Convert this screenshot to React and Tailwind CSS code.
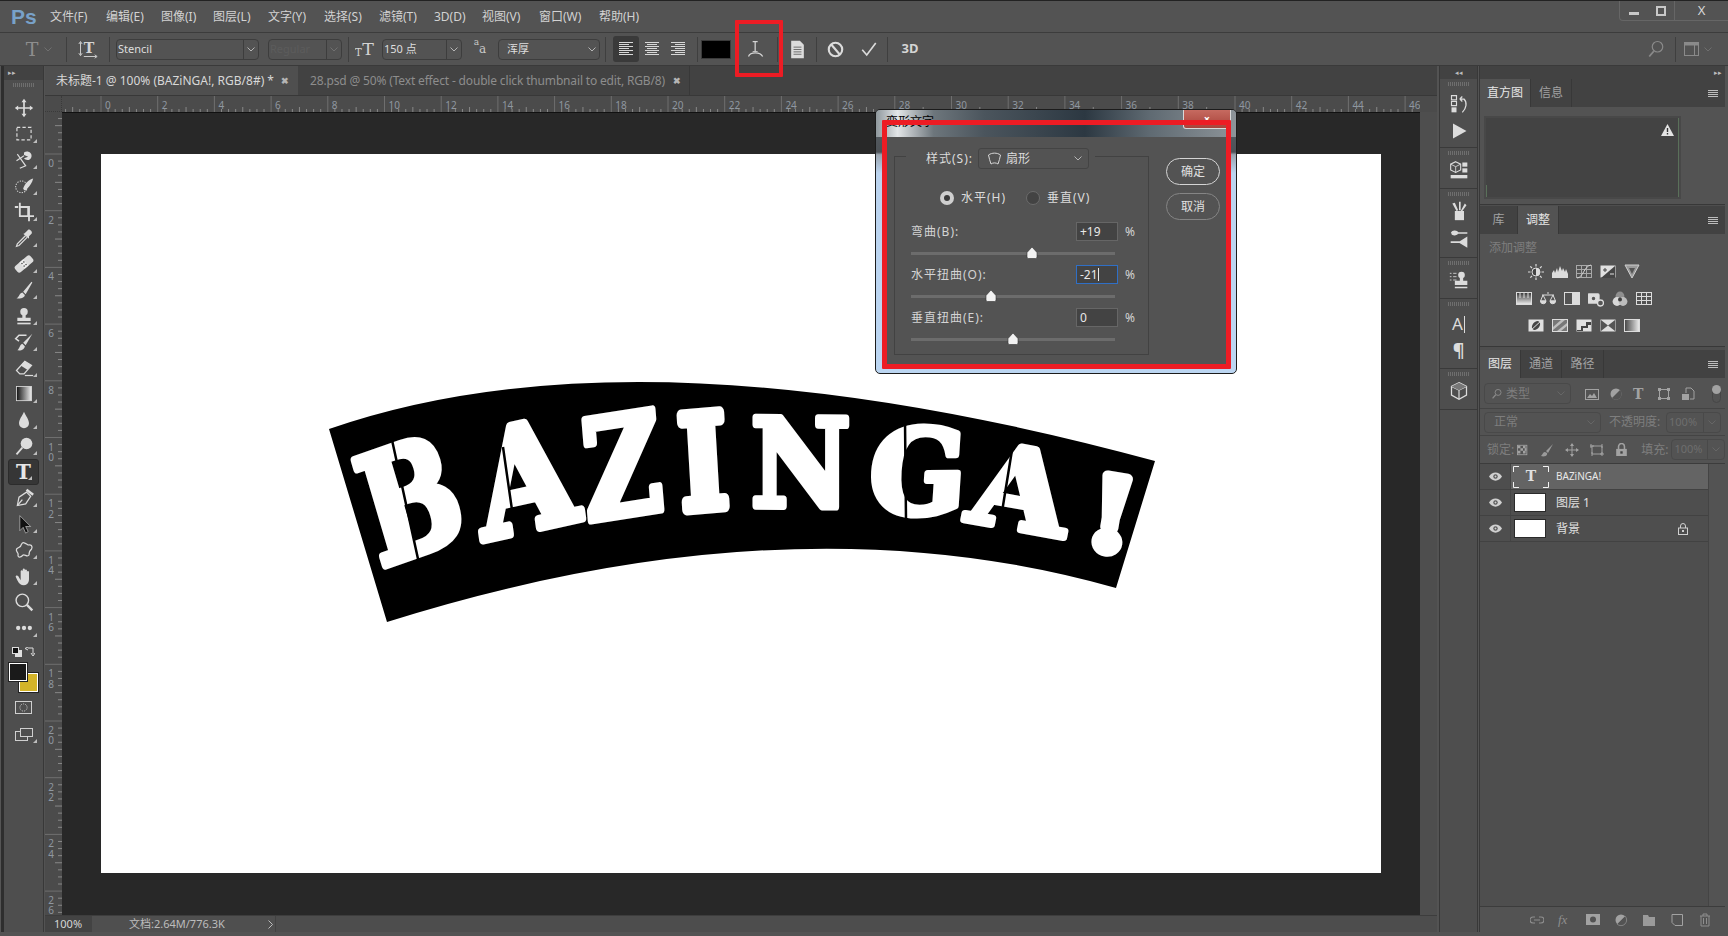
import React from "react";

const C = "#dcdcdc";
const Svg = ({ w = 22, h, vb = "0 0 24 24", children, className = "" }) => (
  <svg width={w} height={h || w} viewBox={vb} fill="none" className={className}>{children}</svg>
);
const Corner = () => (
  <svg width="4" height="4" viewBox="0 0 4 4" className="absolute right-[6px] bottom-[4px]"><path d="M4 0V4H0Z" fill="#bdbdbd" /></svg>
);

const tools = [
  { n: "move", c: 0, i: <g stroke={C} strokeWidth="2"><path d="M12 3V21M3 12H21" /><path d="M12 1L9 5H15ZM12 23L9 19H15ZM1 12L5 9V15ZM23 12L19 9V15Z" fill={C} stroke="none" /></g> },
  { n: "marquee", c: 1, i: <rect x="3.5" y="4" width="17" height="15" stroke={C} strokeWidth="1.4" strokeDasharray="4 2.6" /> },
  { n: "lasso", c: 1, i: <g stroke={C} strokeWidth="1.4"><path d="M4 5L14 19L7 22M3 13L12 7" /><path d="M12 3C16 0 22 3 21 8C20 13 14 13 12 10L17 8L12 6Z" fill={C} stroke="none" /></g> },
  { n: "quick", c: 1, i: <g><circle cx="9" cy="13" r="7" stroke={C} strokeWidth="1.3" strokeDasharray="1.4 1.6" /><path d="M23 3C18 4 13 9 11 15C12 18 15 18 16 15C19 12 22 8 23 3Z" fill={C} /></g> },
  { n: "crop", c: 1, i: <path d="M1 6H5M7 1V17H21M7 6H18V23M8 6H17V16M21 17H24" stroke={C} strokeWidth="2.2" /> },
  { n: "dropper", c: 1, i: <g><path d="M14 9L4 19L3 22L6 21L16 11" stroke={C} strokeWidth="1.5" /><path d="M12 7L14 5L17 2C19 1 23 5 21 7L18 10L18 13L11 7Z" fill={C} /></g> },
  { n: "heal", c: 1, i: <g transform="rotate(-40 12 12)"><rect x="0" y="7" width="24" height="10" rx="3" fill={C} /><rect x="9" y="7" width="6" height="10" fill="#eee" /><circle cx="10.5" cy="10" r=".9" fill="#444" /><circle cx="13.5" cy="10" r=".9" fill="#444" /><circle cx="10.5" cy="14" r=".9" fill="#444" /><circle cx="13.5" cy="14" r=".9" fill="#444" /></g> },
  { n: "brush", c: 1, i: <path d="M21 2L11 14L14 17L22 3ZM10 15C6 16 7 20 3 22C8 23 13 21 13 18Z" fill={C} /> },
  { n: "stamp", c: 1, i: <g fill={C}><circle cx="12" cy="7" r="4.5" /><path d="M10 10H14V14H20V18H4V14H10Z" /><rect x="4" y="20" width="16" height="2" /></g> },
  { n: "history", c: 1, i: <g><path d="M22 2L11 13L14 16Z" fill={C} /><path d="M10 14C7 15 7 19 4 22C9 23 13 20 13 17Z" fill={C} /><path d="M15 4H6L2 8L6 11" stroke={C} strokeWidth="1.8" /></g> },
  { n: "eraser", c: 1, i: <g><path d="M3 15L13 4L21 9L12 19H7Z" stroke={C} strokeWidth="1.5" /><path d="M13 4L21 9L16 14L8 9Z" fill={C} /><path d="M13 21H23" stroke={C} strokeWidth="1.5" /></g> },
  { n: "gradient", c: 1, i: <g><defs><linearGradient id="g1"><stop offset="0" stopColor="#111" /><stop offset="1" stopColor="#eee" /></linearGradient></defs><rect x="3" y="3" width="18" height="17" fill="url(#g1)" stroke={C} /></g> },
  { n: "blur", c: 1, i: <path d="M12 2C10 7 6 11 6 16A6 6 0 0 0 18 16C18 11 14 7 12 2Z" fill={C} /> },
  { n: "dodge", c: 1, i: <g><circle cx="15" cy="9" r="7" fill={C} /><path d="M10 14L3 22" stroke={C} strokeWidth="2.2" /></g> },
  { n: "type", c: 1, a: 1, t: 1 },
  { n: "pen", c: 1, i: <g stroke={C} strokeWidth="1.5"><path d="M4 21L6 11L15 5L20 10L14 19Z" /><path d="M4 21L10 14" /><path d="M15 2L23 8" strokeWidth="3" /></g> },
  { n: "path", c: 1, i: <path d="M7 2V20L11 16L14 23L17 21L14 15H20Z" fill="#111" stroke="#ddd" strokeWidth=".7" /> },
  { n: "shape", c: 1, i: <path d="M3 11C5 8 8 10 9 5C11 1 15 5 17 6C20 5 23 7 21 11C18 13 18 15 18 18C16 21 13 17 11 18C7 22 4 21 5 17C5 15 2 14 3 11Z" stroke={C} strokeWidth="1.5" /> },
  { n: "hand", c: 1, i: <path d="M5 12L8 17V6A1.3 1.3 0 0 1 10.5 6V12V4A1.3 1.3 0 0 1 13 4V12V5A1.3 1.3 0 0 1 15.5 5V12V7A1.3 1.3 0 0 1 18 7V16C18 20 16 23 12 23C8 23 6 21 4 17L2 13C2 11 4 11 5 12Z" fill={C} /> },
  { n: "zoom", c: 0, i: <g stroke={C} strokeWidth="1.7"><circle cx="10" cy="10" r="7.5" /><path d="M15.5 15.5L22 22" strokeWidth="2.8" /></g> },
  { n: "more", c: 1, i: <g fill={C}><circle cx="5" cy="12" r="2.6" /><circle cx="12" cy="12" r="2.6" /><circle cx="19" cy="12" r="2.6" /></g> },
];

function TopRuler() {
  const ticks = [];
  const x0 = 39;
  for (let k = -5; k < 186; k++) {
    const x = x0 + k * 7.0875;
    const major = k % 8 === 0;
    ticks.push(<line key={k} x1={x} x2={x} y1={major ? 0 : k % 4 === 0 ? 11 : 13} y2="16" stroke={major ? "#6f6f6f" : "#878787"} />);
  }
  const labels = [];
  for (let v = 0; v <= 46; v += 2) labels.push(<text key={v} x={x0 + 4 + v * 28.35} y="13" fontSize="10" fill="#8f97a0" fontFamily="Noto Sans">{v}</text>);
  return <svg width="1358" height="16" className="block">{ticks}{labels}</svg>;
}
function LeftRuler() {
  const ticks = [];
  const y0 = 42;
  for (let k = -5; k < 108; k++) {
    const y = y0 + k * 7.0875;
    const major = k % 8 === 0;
    ticks.push(<line key={k} y1={y} y2={y} x1={major ? 0 : k % 4 === 0 ? 10 : 13} x2="17" stroke={major ? "#6f6f6f" : "#878787"} />);
  }
  const labels = [];
  for (let v = 0; v <= 26; v += 2) {
    labels.push(
      <text key={v} x="6" y={y0 + v * 28.35 + 2} fontSize="10" fill="#8f97a0" fontFamily="Noto Sans" style={{ writingMode: "vertical-rl", textOrientation: "upright", letterSpacing: "-3.6px" }}>{v}</text>
    );
  }
  return <svg width="17" height="803" className="block">{ticks}{labels}</svg>;
}

function Letter({ ch, w, bl, br, tl, sw = 6, cap = 78 }) {
  const a = (br[0] - bl[0]) / w, b = (br[1] - bl[1]) / w;
  const c = (bl[0] - tl[0]) / cap, d = (bl[1] - tl[1]) / cap;
  return <text transform={`matrix(${a} ${b} ${c} ${d} ${bl[0]} ${bl[1]})`} fontFamily="DejaVu Serif" fontWeight="700" fontSize="100" fill="#fff" stroke="#fff" strokeWidth={sw} strokeLinejoin="round">{ch}</text>;
}

function Art() {
  return (
    <svg width="1280" height="719" viewBox="101 154 1280 719" className="block">
      <rect x="101" y="154" width="1280" height="719" fill="#fff" />
      <path d="M329 429Q640 321 1155 461L1116 588Q790 495 387 622Z" fill="#000" />
      <Letter ch="B" w={80} bl={[380, 567]} br={[466, 537]} tl={[347, 455]} />
      <Letter ch="A" w={76} bl={[484, 540]} br={[579, 519]} tl={[468, 428]} />
      <Letter ch="Z" w={72} bl={[587, 521]} br={[664, 509]} tl={[578, 414]} />
      <Letter ch="I" w={47} bl={[682, 510]} br={[730, 506]} tl={[676, 409]} sw={9} />
      <Letter ch="N" w={92} bl={[751, 506]} br={[851, 507]} tl={[751, 411]} />
      <Letter ch="G" w={82} bl={[867, 514]} br={[960, 513]} tl={[873, 423]} />
      <Letter ch="A" w={76} bl={[965, 520]} br={[1060, 537]} tl={[982, 434]} />
      <Letter ch="!" w={27} bl={[1082, 546]} br={[1111, 551]} tl={[1095, 468]} sw={10} />
      <g stroke="#000" strokeWidth="2.5">
        <path d="M392 440L420 568M905 421L906 520M503 447L512 510M1012 450L1002 512" />
      </g>
    </svg>
  );
}

const Sep = () => <div className="w-px h-[25px] bg-[#3f3f3f] shrink-0" />;
const Caret = ({ c = "#b5b5b5" }) => <svg width="8" height="5" viewBox="0 0 8 5"><path d="M.5.5L4 4L7.5.5" stroke={c} fill="none" /></svg>;

function Select({ className, label, divide, faded, lp = "pl-[1px]" }) {
  return (
    <div className={`h-[21px] rounded-[4px] border border-[#3d3d3d] flex items-center shrink-0 ${className}`}>
      <span className={`flex-1 text-[11px] whitespace-nowrap ${lp} ${faded ? "text-[#5c5c5c]" : "text-[#dedede]"}`}>{label}</span>
      <span className={`w-[15px] h-full flex items-center justify-center ${divide ? "border-l border-[#3d3d3d]" : ""}`}><Caret c={faded ? "#707070" : "#b5b5b5"} /></span>
    </div>
  );
}

const AlignIcon = ({ kind }) => {
  const rows = [14, 10, 14, 10, 14, 10, 14];
  return (
    <svg width="14" height="15" viewBox="0 0 14 15">
      {rows.map((r, i) => {
        const x = kind === "l" ? 0 : kind === "c" ? (14 - r) / 2 : 14 - r;
        return <rect key={i} x={x} y={i * 2} width={r} height="1" fill="#d8d8d8" />;
      })}
    </svg>
  );
};

const menu = [
  ["文件(F)", "w-[56px]"], ["编辑(E)", "w-[55px]"], ["图像(I)", "w-[52px]"], ["图层(L)", "w-[55px]"], ["文字(Y)", "w-[56px]"],
  ["选择(S)", "w-[55px]"], ["滤镜(T)", "w-[55px]"], ["3D(D)", "w-[48px]"], ["视图(V)", "w-[57px]"], ["窗口(W)", "w-[60px]"], ["帮助(H)", "w-[60px]"],
];

const Grip = () => (
  <svg width="22" height="4" viewBox="0 0 22 4" className="block mx-auto">
    {Array.from({ length: 11 }).map((_, i) => <rect key={i} x={i * 2} y="0" width="1" height="4" fill="#6e6e6e" />)}
  </svg>
);

const Dock = ({ className = "", children }) => (
  <div className={`border-b border-[#3a3a3a] flex flex-col items-center pt-[3px] shrink-0 ${className}`}><Grip />{children}</div>
);

const adjA = [
  <g key="a"><circle cx="8" cy="8" r="4" fill="#444" stroke={C} /><path d="M8 4A4 4 0 0 1 8 12Z" fill={C} /><path d="M8 0V2.5M8 13.5V16M0 8H2.5M13.5 8H16M2.3 2.3L4 4M12 12L13.7 13.7M2.3 13.7L4 12M12 4L13.7 2.3" stroke={C} strokeWidth="1.2" /></g>,
  <path key="b" d="M0 14V9L2 6L3 9L5 4L6 8L8 2L10 7L11 4L13 8L14 5L16 10V14Z" fill={C} />,
  <g key="c" stroke="#a8a8a8"><rect x=".5" y="1.5" width="15" height="12" /><path d="M5.5 1.5V13.5M10.5 1.5V13.5M.5 5.5H15.5M.5 9.5H15.5" /><path d="M1 14C7 14 8 2 15 1" stroke="#d0d0d0" /></g>,
  <g key="d"><rect x=".5" y="1.5" width="15" height="12" fill="#e0e0e0" /><path d="M1 14L15 2V14Z" fill="#444" /><path d="M3 6H7M5 4V8" stroke="#444" strokeWidth="1" /><path d="M10 10H14" stroke="#e0e0e0" /></g>,
  <g key="e"><path d="M1 1H15L8 14Z" fill="#9a9a9a" stroke="#cfcfcf" /><path d="M5 4H11L8 10Z" fill="#555" /></g>,
];
const adjB = [
  <g key="a"><defs><linearGradient id="g2" x1="0" y1="0" x2="0" y2="1"><stop offset="0" stopColor="#333" /><stop offset="1" stopColor="#eee" /></linearGradient></defs><rect x=".5" y="1.5" width="15" height="12" fill="url(#g2)" stroke={C} /><path d="M4 2V7M8 2V7M12 2V7" stroke="#ddd" /></g>,
  <g key="b" stroke={C}><path d="M8 1V3M2 4H14M3 4L.5 10H6ZM13 4L10 10H15.5Z" /><path d="M.5 10A2.7 2.7 0 0 0 6 10ZM10 10A2.7 2.7 0 0 0 15.5 10Z" fill={C} /></g>,
  <g key="c"><rect x=".5" y="1.5" width="15" height="12" stroke={C} /><rect x="8" y="1.5" width="7.5" height="12" fill={C} /></g>,
  <g key="d" stroke={C} strokeWidth="1.3"><rect x="0" y="3" width="11" height="9" rx="1" fill="#ddd" /><circle cx="5.5" cy="7.5" r="2.4" fill="#555" /><circle cx="12.5" cy="12" r="3" fill="#555" /></g>,
  <g key="e"><circle cx="8" cy="5" r="4.4" fill="#8f8f8f" /><circle cx="5" cy="10.5" r="4.4" fill="#d8d8d8" /><circle cx="11" cy="10.5" r="4.4" fill="#bdbdbd" /><circle cx="8" cy="8.5" r="2" fill="#3d3d3d" /></g>,
  <g key="f" stroke={C}><rect x=".5" y="1.5" width="15" height="12" /><path d="M5.5 1.5V13.5M10.5 1.5V13.5M.5 5.5H15.5M.5 9.5H15.5" /></g>,
];
const adjC = [
  <g key="a"><rect x=".5" y="1.5" width="15" height="12" fill="#e0e0e0" /><ellipse cx="8" cy="7.5" rx="3.4" ry="5" transform="rotate(40 8 7.5)" fill="#444" /><path d="M2 13L14 2" stroke="#e0e0e0" /></g>,
  <g key="b"><rect x=".5" y="1.5" width="15" height="12" fill="#777" stroke={C} /><path d="M1 9L9 2H13L1 12ZM5 13L15 5V8L9 13Z" fill="#bdbdbd" /></g>,
  <g key="c"><rect x=".5" y="1.5" width="15" height="12" fill="#e0e0e0" /><path d="M1 12H5V8H10V4H15V7H12V10H7V13H1Z" fill="#444" /></g>,
  <g key="d"><rect x=".5" y="1.5" width="15" height="12" fill="#e0e0e0" /><path d="M1 2L8 7.5L1 13ZM15 2L8 7.5L15 13Z" fill="#555" /></g>,
  <g key="e"><defs><linearGradient id="g3"><stop offset="0" stopColor="#444" /><stop offset="1" stopColor="#eee" /></linearGradient></defs><rect x=".5" y="1.5" width="15" height="12" fill="url(#g3)" stroke={C} /></g>,
];
const AdjRow = ({ items, className }) => (
  <div className={`flex gap-[8px] justify-center w-[208px] ${className}`}>
    {items.map((x, i) => <svg key={i} width="16" height="16" viewBox="0 0 16 16" fill="none">{x}</svg>)}
  </div>
);

const PTab = ({ active, className, children }) => (
  <div className={`h-full flex items-center justify-center text-[12px] border-r border-[#383838] shrink-0 ${className} ${active ? "bg-[#535353] text-[#e6e6e6]" : "text-[#a2a2a2]"}`}>{children}</div>
);
const Ham = () => (
  <svg width="10" height="7" viewBox="0 0 10 7" className="ml-auto mr-[7px]"><path d="M0 .5H10M0 2.5H10M0 4.5H10M0 6.5H10" stroke="#bdbdbd" /></svg>
);
const Eye = () => (
  <svg width="13" height="9" viewBox="0 0 13 9"><path d="M0 4.5C3 -1 10 -1 13 4.5C10 10 3 10 0 4.5Z" fill="#d0d0d0" /><circle cx="6.5" cy="4.5" r="2.2" fill="#555" /><circle cx="6.5" cy="4.5" r="1" fill="#d0d0d0" /></svg>
);
const Lock = ({ c = "#8e8e8e", s = 11 }) => (
  <svg width={s} height={s} viewBox="0 0 11 11"><path d="M3 5V3A2.5 2.5 0 0 1 8 3V5" stroke={c} fill="none" strokeWidth="1.3" /><rect x="1" y="5" width="9" height="6" fill={c} /><rect x="4.5" y="7" width="2" height="2" fill="#444" /></svg>
);
const Small = ({ children, w = 14 }) => <svg width={w} height="14" viewBox="0 0 14 14" fill="none">{children}</svg>;

const Slider = ({ pos }) => (
  <div className="relative w-[204px] h-[3px] bg-[#6c6c6c] mt-[11px]">
    <svg width="12" height="12" viewBox="0 0 12 12" className="absolute top-[-5px]" style={{ left: pos }}><path d="M6 0L11 5.5V10A1.5 1.5 0 0 1 9.5 11.5H2.5A1.5 1.5 0 0 1 1 10V5.5Z" fill="#f2f2f2" stroke="#333" strokeWidth=".6" /></svg>
  </div>
);
const Row = ({ label, field, mt, children, focus }) => (
  <div className={`flex items-center h-[19px] text-[12px] text-[#d4d4d4] ${mt}`}>
    <span className="w-[165px] tracking-[1px]">{label}</span>
    <span className={`w-[42px] h-[19px] bg-[#434343] border flex items-center pl-[3px] text-[#e8e8e8] text-[12px] ${focus ? "border-[#2f6fc6]" : "border-[#666666]"}`}>{field}{children}</span>
    <span className="ml-[7px] text-[12px]">%</span>
  </div>
);

export default function App() {
  return (
    <div className="relative w-[1728px] h-[936px] overflow-hidden bg-[#2b2b2b] flex flex-col font-['Noto_Sans','Noto_Sans_CJK_SC',sans-serif] text-[#d6d6d6]">
      {/* title + menu */}
      <div className="h-[32px] bg-[#535353] flex items-center shrink-0 border-t border-[#222222]">
        <span className="w-[50px] pl-[11px] text-[21px] font-bold leading-none text-[#78a1c9] font-['Liberation_Sans',sans-serif]">Ps</span>
        {menu.map(([t, w]) => <span key={t} className={`${w} shrink-0 text-[12px] whitespace-nowrap text-[#d2d2d2]`}>{t}</span>)}
        <div className="ml-auto self-start w-[109px] h-[20px] border-l border-b border-[#666666] rounded-bl-[4px] flex items-center">
          <span className="w-[27px] flex justify-center pt-[6px]"><span className="w-[10px] h-[3px] bg-[#c8c8c8] block" /></span>
          <span className="w-[28px] flex justify-center border-r border-[#666666] h-full items-center"><span className="w-[10px] h-[10px] border-[2px] border-[#c8c8c8] block" /></span>
          <span className="flex-1 text-center text-[13px] text-[#d8d8d8] leading-none">X</span>
        </div>
      </div>
      {/* options */}
      <div className="h-[33px] bg-[#535353] border-t border-[#3c3c3c] flex items-center shrink-0">
        <div className="w-[12px]" />
        <div className="w-[54px] flex items-center justify-center gap-[6px] shrink-0">
          <span className="text-[19px] leading-none text-[#8e8e8e] font-['DejaVu_Serif',serif]">T</span><Caret c="#707070" />
        </div>
        <Sep />
        <div className="w-[42px] flex justify-center shrink-0">
          <Svg w={20}><text x="7" y="17" fontSize="17" fontWeight="700" fontFamily="DejaVu Serif" fill="#d4d4d4">T</text><path d="M3 4V19M1 6L3 3L5 6M1 17L3 20L5 17M7 21H22M20 19L23 21L20 23" stroke="#d4d4d4" strokeWidth="1.1" /></Svg>
        </div>
        <Sep />
        <Select className="ml-[6px] w-[143px]" label="Stencil" divide />
        <Select className="ml-[9px] w-[74px]" label="Regular" divide faded />
        <div className="ml-[6px]"><Sep /></div>
        <div className="w-[33px] flex justify-center shrink-0">
          <Svg w={22}><text x="8" y="18" fontSize="19" fontWeight="400" fontFamily="DejaVu Serif" fill="#d4d4d4">T</text><text x="0" y="20" fontSize="11" fontWeight="400" fontFamily="DejaVu Serif" fill="#d4d4d4">T</text></Svg>
        </div>
        <Select className="w-[80px]" label="150 点" divide />
        <div className="w-[36px] flex justify-center shrink-0 text-[12px] text-[#c8c8c8] font-['DejaVu_Serif',serif]"><span className="text-[9px] -mt-[4px]">a</span><span>a</span></div>
        <Select className="w-[102px]" label="浑厚" lp="pl-[8px]" />
        <div className="ml-[5px]"><Sep /></div>
        <div className="ml-[7px] w-[26px] h-[26px] rounded-[3px] bg-[#3a3a3a] flex items-center justify-center shrink-0"><AlignIcon kind="l" /></div>
        <div className="w-[26px] flex justify-center shrink-0"><AlignIcon kind="c" /></div>
        <div className="w-[26px] flex justify-center shrink-0"><AlignIcon kind="r" /></div>
        <div className="ml-[6px]"><Sep /></div>
        <div className="ml-[3px] w-[30px] h-[19px] bg-black border border-[#3a3a3a] shrink-0" />
        <div className="w-[46px] flex justify-center shrink-0 pl-[4px]">
          <Svg w={20}><path d="M8 3H14M11 3V15M3 21C5 15 17 15 20 21" stroke="#d4d4d4" strokeWidth="1.5" /><path d="M8 15H14" stroke="#d4d4d4" /></Svg>
        </div>
        <Sep />
        <div className="w-[38px] flex justify-center shrink-0">
          <Svg w={19}><path d="M4 1H15L20 6V23H4Z" fill="#dcdcdc" /><path d="M7 9H17M7 12H17M7 15H17M7 18H17" stroke="#535353" /></Svg>
        </div>
        <Sep />
        <div className="w-[37px] flex justify-center shrink-0">
          <Svg w={17}><circle cx="12" cy="12" r="9.5" stroke="#dcdcdc" strokeWidth="3" /><path d="M6 5L18 19" stroke="#dcdcdc" strokeWidth="3" /></Svg>
        </div>
        <div className="w-[33px] flex justify-start pl-[6px] shrink-0">
          <Svg w={18}><path d="M3 13L9 20L21 4" stroke="#dcdcdc" strokeWidth="2.2" /></Svg>
        </div>
        <Sep />
        <div className="w-[44px] text-center text-[13px] font-bold text-[#d4d4d4] shrink-0">3D</div>
        <div className="ml-auto w-[38px] flex justify-center shrink-0">
          <Svg w={18}><circle cx="14" cy="9" r="7" stroke="#8a8a8a" strokeWidth="1.6" /><path d="M9 15L3 22" stroke="#8a8a8a" strokeWidth="2.4" /></Svg>
        </div>
        <Sep />
        <div className="w-[52px] pl-[8px] flex items-center gap-[5px] shrink-0">
          <svg width="15" height="14" viewBox="0 0 15 14"><rect x=".5" y=".5" width="14" height="13" stroke="#8a8a8a" fill="none" /><rect x=".5" y=".5" width="14" height="3" fill="#8a8a8a" /><path d="M10.5 3V13" stroke="#8a8a8a" /></svg>
          <Caret c="#6f6f6f" />
        </div>
      </div>
      {/* body */}
      <div className="flex-1 flex min-h-0 pb-[4px] border-t border-[#3a3a3a] bg-[#535353]">
        <div className="w-[4px] bg-[#2e2e2e] border-l border-[#555555] shrink-0" />
        <div className="w-[40px] shrink-0 bg-[#4e4e4e] border-r border-[#383838] flex flex-col">
          <div className="h-[14px] bg-[#424242] text-[7px] leading-[14px] pl-[4px] text-[#bdbdbd]">▸▸</div>
          <div className="h-[15px] pt-[3px]"><Grip /></div>
          {tools.map((t) => (
            <div key={t.n} className={`relative h-[26px] flex items-center justify-center shrink-0 ${t.a ? "bg-[#363636] border border-[#2c2c2c] rounded-[3px] mx-[4px]" : ""}`}>
              {t.t ? <span className="text-[20px] font-bold leading-none text-[#e6e6e6] font-['DejaVu_Serif',serif]">T</span> : <Svg w={20}>{t.i}</Svg>}
              {t.c === 1 && <Corner />}
            </div>
          ))}
          <div className="flex justify-between px-[8px] mt-[4px] h-[14px] items-center">
            <svg width="10" height="10" viewBox="0 0 10 10"><rect x="3" y="3" width="7" height="7" fill="#e0e0e0" /><rect x=".5" y=".5" width="6" height="6" fill="#111" stroke="#ddd" /></svg>
            <svg width="10" height="10" viewBox="0 0 10 10"><path d="M3 1H8V7M6 6L8 9L10 6M3 0L0 1.5L3 3" stroke="#ddd" fill="none" /></svg>
          </div>
          <div className="relative h-[30px] mt-[4px]">
            <div className="absolute left-[15px] top-[10px] w-[19px] h-[19px] bg-[#d4b429] border border-white outline outline-1 outline-[#222222]" />
            <div className="absolute left-[5px] top-[0px] w-[18px] h-[18px] bg-[#1a1a1a] border border-white outline outline-1 outline-[#222222]" />
          </div>
          <div className="h-[28px] flex items-center justify-center">
            <svg width="17" height="13" viewBox="0 0 17 13"><rect x=".5" y=".5" width="16" height="12" stroke="#cfcfcf" fill="none" /><circle cx="8.5" cy="6.5" r="3.6" stroke="#cfcfcf" strokeDasharray="1 1" fill="none" /></svg>
          </div>
          <div className="relative h-[26px] flex items-center justify-center">
            <svg width="18" height="13" viewBox="0 0 18 13" fill="none"><rect x=".5" y="3.5" width="12" height="9" stroke="#cfcfcf" /><rect x="5.5" y=".5" width="12" height="8" fill="#4e4e4e" stroke="#cfcfcf" /></svg>
            <Corner />
          </div>
        </div>
        {/* centre */}
        <div className="w-[1392px] ml-px shrink-0 flex flex-col min-h-0">
          <div className="h-[30px] bg-[#424242] flex shrink-0 border-b border-[#383838] text-[12px]">
            <div className="w-[253px] bg-[#4f4f4f] flex items-center pl-[11px] text-[#d8d8d8] whitespace-nowrap shrink-0">
              <span className="flex-1">未标题-1 @ 100% (BAZiNGA!, RGB/8#) *</span><span className="pr-[9px] text-[9px] font-bold text-[#b5b5b5]">✖</span>
            </div>
            <div className="w-[392px] flex items-center pl-[12px] text-[#8d8d8d] whitespace-nowrap border-r border-[#383838] shrink-0">
              <span className="flex-1 tracking-[-0.16px]">28.psd @ 50% (Text effect - double click thumbnail to edit, RGB/8)</span><span className="pr-[8px] text-[9px] font-bold text-[#b5b5b5]">✖</span>
            </div>
          </div>
          <div className="h-[16px] flex shrink-0 bg-[#4b4b4b]">
            <div className="w-[17px] shrink-0 border-r border-[#3a3a3a] border-b border-dotted" />
            <TopRuler />
          </div>
          <div className="flex-1 flex min-h-0">
            <div className="w-[17px] shrink-0 bg-[#4b4b4b] overflow-hidden"><LeftRuler /></div>
            <div className="w-[1358px] shrink-0 bg-[#282828] border-t border-[#111111] pl-[39px] pt-[41px] overflow-hidden">
              <Art />
            </div>
            <div className="flex-1 bg-[#4e4e4e]" />
          </div>
          <div className="h-[17px] bg-[#4d4d4d] flex items-center shrink-0 text-[11px] border-t border-[#3d3d3d]">
            <span className="w-[47px] h-full bg-[#434343] pl-[9px] text-[#d6d6d6]">100%</span>
            <span className="w-[184px] h-full bg-[#4f4f4f] border-r border-[#424242] flex items-center pl-[37px] text-[#bdbdbd] whitespace-nowrap">
              <span className="w-[139px]">文档:2.64M/776.3K</span>
              <svg width="5" height="9" viewBox="0 0 5 9"><path d="M.5.5L4.5 4.5L.5 8.5" stroke="#bdbdbd" fill="none" /></svg>
            </span>
          </div>
        </div>
        {/* dock */}
        <div className="ml-[2px] w-[39px] shrink-0 flex flex-col bg-[#4e4e4e] border-x border-[#383838]">
          <div className="h-[13px] bg-[#424242] shrink-0 text-[7px] leading-[13px] text-center text-[#bdbdbd]">◂◂</div>
          <Dock className="h-[69px]">
            <div className="mt-[8px]"><Svg w={20}><path d="M3 2H9V7H3ZM3 9H9V14H3Z" stroke={C} strokeWidth="1.4" /><rect x="3" y="16" width="6" height="6" fill={C} /><path d="M13 6H18C22 10 21 17 16 22M13 6L16 3M13 6L16 9" stroke={C} strokeWidth="1.5" /></Svg></div>
            <div className="mt-[8px]"><Svg w={18}><path d="M4 2L22 12L4 22Z" fill={C} /></Svg></div>
          </Dock>
          <Dock className="h-[41px]">
            <div className="mt-[5px]"><Svg w={20}><path d="M8 2L14 5V12L8 15L2 12V5Z" stroke={C} strokeWidth="1.3" /><path d="M2 5L8 8L14 5M8 8V15" stroke={C} /><rect x="16" y="3" width="6" height="5" fill={C} /><rect x="16" y="10" width="6" height="5" fill={C} /><rect x="2" y="18" width="20" height="4" fill={C} /></Svg></div>
          </Dock>
          <Dock className="h-[69px]">
            <div className="mt-[5px]"><Svg w={20}><path d="M7 12H18V23H7Z" fill={C} /><path d="M9 12L4 3L7 2L11 11M12 11V1H14V11M14 12L19 3L21 5L16 12" fill={C} /></Svg></div>
            <div className="mt-[7px]"><Svg w={20}><path d="M3 6C5 3 9 4 11 6H22M3 6C5 9 9 8 11 6M2 17H13M13 17L21 12V22Z" stroke={C} strokeWidth="2" fill={C} /></Svg></div>
          </Dock>
          <Dock className="h-[41px]">
            <div className="mt-[5px]"><Svg w={20}><path d="M1 4H3M1 8H3M1 12H3M5 4H9M5 8H9M5 12H9" stroke={C} /><circle cx="15" cy="6" r="4" fill={C} /><path d="M13 9H17V13H22V18H7V13H13ZM7 20H22V22H7Z" fill={C} /></Svg></div>
          </Dock>
          <Dock className="h-[70px]">
            <div className="mt-[6px] text-[17px] leading-[24px] text-[#dcdcdc] flex items-center">A<span className="w-px h-[17px] bg-[#dcdcdc] ml-[1px]" /></div>
            <div className="mt-[2px] text-[18px] leading-[24px] text-[#dcdcdc] font-bold">¶</div>
          </Dock>
          <Dock className="h-[41px]">
            <div className="mt-[5px]"><Svg w={20}><path d="M12 2L21 6.5V17L12 22L3 17V6.5Z" stroke={C} strokeWidth="1.5" /><path d="M3 6.5L12 11L21 6.5M12 11V22" stroke={C} strokeWidth="1.4" /><path d="M3 6.5L12 2L21 6.5L12 11Z" fill="#777" /></Svg></div>
          </Dock>
        </div>
        {/* panels */}
        <div className="ml-px w-[246px] shrink-0 flex flex-col bg-[#4e4e4e] border-l border-[#383838]">
          <div className="h-[13px] bg-[#424242] shrink-0 text-[7px] leading-[13px] text-right pr-[3px] text-[#bdbdbd]">▸▸</div>
          <div className="h-[126px] shrink-0 flex flex-col bg-[#535353] border-b border-[#383838]">
            <div className="h-[28px] bg-[#424242] flex items-center shrink-0">
              <PTab active className="w-[51px]">直方图</PTab><PTab className="w-[41px]">信息</PTab><Ham />
            </div>
            <div className="relative mt-[9px] ml-[4px] w-[197px] h-[83px] bg-[#434343] border-2 border-[#484848]">
              <span className="absolute right-0 top-0 bottom-0 w-px bg-[#5a705a]" />
              <span className="absolute left-0 bottom-0 h-[12px] w-px bg-[#5a705a]" />
              <svg width="13" height="12" viewBox="0 0 13 12" className="absolute right-[5px] top-[6px]"><path d="M6.5 0L13 12H0Z" fill="#e4e4e4" /><rect x="5.8" y="4" width="1.4" height="4" fill="#333" /><rect x="5.8" y="9" width="1.4" height="1.5" fill="#333" /></svg>
            </div>
          </div>
          <div className="mt-[1px] h-[141px] shrink-0 flex flex-col bg-[#535353] border-b border-[#383838]">
            <div className="h-[28px] bg-[#424242] flex items-center shrink-0">
              <PTab className="w-[38px]">库</PTab><PTab active className="w-[41px]">调整</PTab><Ham />
            </div>
            <div className="pl-[9px] mt-[6px] text-[12px] leading-[16px] text-[#7e7e7e]">添加调整</div>
            <AdjRow items={adjA} className="mt-[8px]" />
            <AdjRow items={adjB} className="mt-[11px]" />
            <AdjRow items={adjC} className="mt-[11px]" />
          </div>
          <div className="mt-[3px] flex-1 flex flex-col bg-[#535353] min-h-0">
            <div className="h-[28px] bg-[#424242] flex items-center shrink-0">
              <PTab active className="w-[41px]">图层</PTab><PTab className="w-[41px]">通道</PTab><PTab className="w-[42px]">路径</PTab><Ham />
            </div>
            <div className="h-[31px] flex items-center shrink-0 border-b border-[#444444] pl-[4px] pt-[1px]">
              <div className="w-[87px] h-[21px] rounded-[4px] border border-[#494949] flex items-center pl-[6px] text-[12px] text-[#7e7e7e] gap-[4px]">
                <Small w={11}><circle cx="9" cy="5" r="3.8" stroke="#8a8a8a" strokeWidth="1.2" /><path d="M6 8L2 12.5" stroke="#8a8a8a" strokeWidth="1.6" /></Small>
                <span className="flex-1">类型</span><span className="pr-[5px]"><Caret c="#666666" /></span>
              </div>
              <div className="ml-[14px] flex gap-[10px] items-center">
                <Small><rect x=".5" y="2.5" width="13" height="10" stroke="#a2a2a2" /><path d="M2 11L5 7L7 9L9 6L12 11Z" fill="#a2a2a2" /></Small>
                <Small><circle cx="7" cy="7" r="5.5" fill="#a2a2a2" /><path d="M11 3L3 11A5.5 5.5 0 0 0 11 3Z" fill="#535353" /></Small>
                <span className="w-[14px] text-[14px] leading-none font-bold text-[#a2a2a2] font-['DejaVu_Serif',serif]">T</span>
                <Small><path d="M2.5 2.5H11.5V11.5H2.5Z" stroke="#a2a2a2" /><path d="M1 1H4V4H1ZM10 1H13V4H10ZM1 10H4V13H1ZM10 10H13V13H10Z" fill="#a2a2a2" /></Small>
                <Small><path d="M5 6V1H10L13 4V12H9" stroke="#a2a2a2" /><rect x="1" y="7" width="7" height="6" fill="#a2a2a2" /></Small>
              </div>
              <div className="ml-auto mr-[4px] w-[9px] h-[18px] rounded-full border border-[#464646] relative">
                <span className="absolute -left-[1px] -top-[1px] w-[9px] h-[9px] rounded-full bg-[#a2a2a2]" />
              </div>
            </div>
            <div className="h-[27px] flex items-center shrink-0 border-b border-[#444444] pl-[4px] text-[12px] text-[#7e7e7e]">
              <div className="w-[117px] h-[21px] rounded-[4px] border border-[#494949] flex items-center pl-[9px] justify-between pr-[5px]"><span>正常</span><Caret c="#666666" /></div>
              <span className="ml-[8px] w-[57px] whitespace-nowrap">不透明度:</span>
              <div className="w-[55px] h-[21px] rounded-[4px] border border-[#494949] flex items-center text-[11px] text-[#6e6e6e] pl-[2px]"><span className="flex-1">100%</span><span className="w-[17px] h-full border-l border-[#494949] flex items-center justify-center"><Caret c="#666666" /></span></div>
            </div>
            <div className="h-[28px] flex items-center shrink-0 border-b border-[#3c3c3c] pl-[7px] text-[12px] text-[#7e7e7e]">
              <span className="w-[31px] whitespace-nowrap">锁定:</span>
              <div className="flex gap-[11px] items-center">
                <Small w={12}><rect x=".5" y="1.5" width="11" height="11" stroke="#a2a2a2" /><path d="M1 2H4V5H1ZM7 2H10V5H7ZM4 5H7V8H4ZM9 5H11V8H9ZM1 8H4V11H1ZM7 8H10V11H7Z" fill="#a2a2a2" /></Small>
                <Small><path d="M13 1L6 8L8 10ZM5 9C3 9 3 11 1 13C4 14 8 13 7 10Z" fill="#9a9a9a" /></Small>
                <Small><path d="M7 1V13M1 7H13" stroke="#a2a2a2" /><path d="M7 0L5 3H9ZM7 14L5 11H9ZM0 7L3 5V9ZM14 7L11 5V9Z" fill="#a2a2a2" /></Small>
                <Small><path d="M2 3H12V11H2ZM1 1V5M12 1L12 5M0 3H4M10 11H14M12 9V13M2 9V13" stroke="#a2a2a2" /></Small>
                <Lock c="#a2a2a2" s={13} />
              </div>
              <span className="ml-[13px] w-[30px] whitespace-nowrap">填充:</span>
              <div className="ml-[1px] w-[55px] h-[21px] rounded-[4px] border border-[#494949] flex items-center text-[11px] text-[#6e6e6e] pl-[2px]"><span className="flex-1">100%</span><span className="w-[17px] h-full border-l border-[#494949] flex items-center justify-center"><Caret c="#666666" /></span></div>
            </div>
            <div className="w-[229px] flex-1 flex flex-col border-r border-[#444444] bg-[#4e4e4e]">
              <div className="h-[26px] flex items-center shrink-0 border-b border-[#424242]">
                <div className="w-[31px] flex justify-center border-r border-[#444444] h-full items-center shrink-0"><Eye /></div>
                <div className="flex-1 h-full bg-[#646464] flex items-center pl-[2px]">
                  <div className="relative w-[36px] h-[22px] flex items-center justify-center text-[14px] font-bold text-[#e0e0e0] font-['DejaVu_Serif',serif]">T
                    <svg width="36" height="22" viewBox="0 0 36 22" className="absolute left-0 top-0"><path d="M.5 6V.5H6M30 .5H35.5V6M.5 16V21.5H6M30 21.5H35.5V16" stroke="#f2f2f2" fill="none" /></svg>
                  </div>
                  <span className="ml-[7px] text-[10px] text-[#e8e8e8]">BAZiNGA!</span>
                </div>
              </div>
              <div className="h-[26px] flex items-center shrink-0 border-b border-[#424242]">
                <div className="w-[31px] flex justify-center border-r border-[#444444] h-full items-center shrink-0"><Eye /></div>
                <div className="ml-[3px] w-[32px] h-[19px] bg-white border border-[#2a2a2a]" />
                <span className="ml-[10px] text-[12px] text-[#e0e0e0]">图层 1</span>
              </div>
              <div className="h-[26px] flex items-center shrink-0 border-b border-[#424242]">
                <div className="w-[31px] flex justify-center border-r border-[#444444] h-full items-center shrink-0"><Eye /></div>
                <div className="ml-[3px] w-[32px] h-[19px] bg-white border border-[#2a2a2a]" />
                <span className="ml-[10px] text-[12px] text-[#e0e0e0]">背景</span>
                <span className="ml-auto mr-[20px]"><svg width="10" height="12" viewBox="0 0 10 12"><path d="M2.5 5V3A2.5 2.5 0 0 1 7.5 3V5" stroke="#d0d0d0" fill="none" /><rect x=".5" y="5" width="9" height="6.5" stroke="#d0d0d0" fill="none" /><rect x="4" y="7" width="2" height="2" fill="#d0d0d0" /></svg></span>
              </div>
            </div>
            <div className="h-[26px] shrink-0 border-t border-[#3c3c3c] flex items-center justify-end pr-[13px] gap-[14px]">
              <Small><path d="M5 4H3A3 3 0 0 0 3 10H5M9 4H11A3 3 0 0 1 11 10H9M4 7H10" stroke="#8e8e8e" strokeWidth="1.2" /></Small>
              <span className="w-[14px] text-[13px] italic leading-none text-[#8e8e8e] font-['Liberation_Serif',serif]">fx</span>
              <Small><rect y="1" width="14" height="11" fill="#a2a2a2" /><circle cx="7" cy="6.5" r="3" fill="#535353" /></Small>
              <Small><circle cx="7" cy="7" r="5.5" fill="#a2a2a2" /><path d="M11 3L3 11A5.5 5.5 0 0 0 11 3Z" fill="#535353" stroke="#a2a2a2" strokeWidth=".5" /></Small>
              <Small><path d="M1 2H6L7 4H13V13H1Z" fill="#9a9a9a" /></Small>
              <Small><path d="M2 1.5H12.5V12.5H5L2 9.5Z" stroke="#a2a2a2" /></Small>
              <Small><path d="M2 3H12M5 3V1H9V3M3 3V13H11V3M5.5 5V11M8.5 5V11" stroke="#8e8e8e" /></Small>
            </div>
          </div>
        </div>
      </div>

      {/* Warp text dialog */}
      <div className="absolute left-[875px] top-[109px] w-[362px] h-[265px] rounded-[5px] border border-[#1c1c1c] flex flex-col px-[6px] pb-[5px] bg-[linear-gradient(180deg,#5a6268_0%,#4d5257_16%,#9aa4ae_17%,#bcd4ef_24%,#bcd6f2_100%)]">
        <div className="relative h-[27px] mx-[-6px] shrink-0 rounded-t-[4px] px-[10px] pt-[3px] text-[12px] text-black bg-[linear-gradient(90deg,#8f989d_0%,#e3e6e8_6%,#6d767c_16%,#4b555d_30%,#2c3842_58%,#5f6a72_76%,#8d9499_100%)]">
          变形文字
          <div className="absolute right-[5px] top-0 w-[48px] h-[19px] rounded-b-[3px] border border-t-0 border-[#d9d9d9] bg-[linear-gradient(180deg,#c66a60,#a8433a)] flex items-center justify-center text-white text-[11px] font-bold">×</div>
        </div>
        <div className="flex-1 bg-[#535353] flex pl-[12px] min-h-0">
          <div className="mt-[19px] w-[255px] h-[199px] border border-[#424242] pl-[16px] shrink-0">
            <div className="-mt-[9px] -ml-[5px] w-[189px] h-[21px] bg-[#535353] flex items-center pl-[20px] text-[12px] text-[#dcdcdc]">
              <span className="w-[52px] tracking-[1px]">样式(S):</span>
              <div className="w-[111px] h-[21px] rounded-[3px] border border-[#444444] flex items-center pl-[8px] gap-[4px]">
                <svg width="15" height="13" viewBox="0 0 15 13" fill="none"><path d="M1.5 3C5 .5 10 .5 13.5 3C13 6 12 9 11 12C9 10.5 6 10.5 4 12C3 9 2 6 1.5 3Z" stroke="#d8d8d8" /></svg>
                <span className="flex-1">扇形</span><span className="pr-[6px]"><Caret /></span>
              </div>
            </div>
            <div className="mt-[21px] h-[16px] flex items-center text-[12px] text-[#dcdcdc]">
              <span className="ml-[29px] w-[14px] h-[14px] rounded-full bg-[#cfcfcf] flex items-center justify-center"><span className="w-[6px] h-[6px] rounded-full bg-[#3a3a3a]" /></span>
              <span className="ml-[7px] w-[65px] tracking-[1px]">水平(H)</span>
              <span className="w-[14px] h-[14px] rounded-full bg-[#434343] border border-[#6b6b6b]" />
              <span className="ml-[7px] tracking-[1px]">垂直(V)</span>
            </div>
            <Row label="弯曲(B):" field="+19" mt="mt-[16px]" />
            <Slider pos={115} />
            <Row label="水平扭曲(O):" field="-21" mt="mt-[10px]" focus><span className="w-px h-[13px] bg-[#e8e8e8]" /></Row>
            <Slider pos={74} />
            <Row label="垂直扭曲(E):" field="0" mt="mt-[10px]" />
            <Slider pos={96} />
          </div>
          <div className="ml-[17px] mt-[21px] w-[54px] flex flex-col gap-[8px] shrink-0">
            <div className="h-[27px] rounded-full border border-[#d4d4d4] flex items-center justify-center text-[12px] text-[#e0e0e0]">确定</div>
            <div className="h-[27px] rounded-full border border-[#858585] flex items-center justify-center text-[12px] text-[#e0e0e0]">取消</div>
          </div>
        </div>
      </div>
      <div className="absolute left-[882px] top-[120px] w-[349px] h-[249px] border-[5px] border-[#ed1c24] rounded-[1px]" />
      <div className="absolute left-[735px] top-[20px] w-[48px] h-[57px] border-[4px] border-[#ed1c24] rounded-[1px]" />
    </div>
  );
}
